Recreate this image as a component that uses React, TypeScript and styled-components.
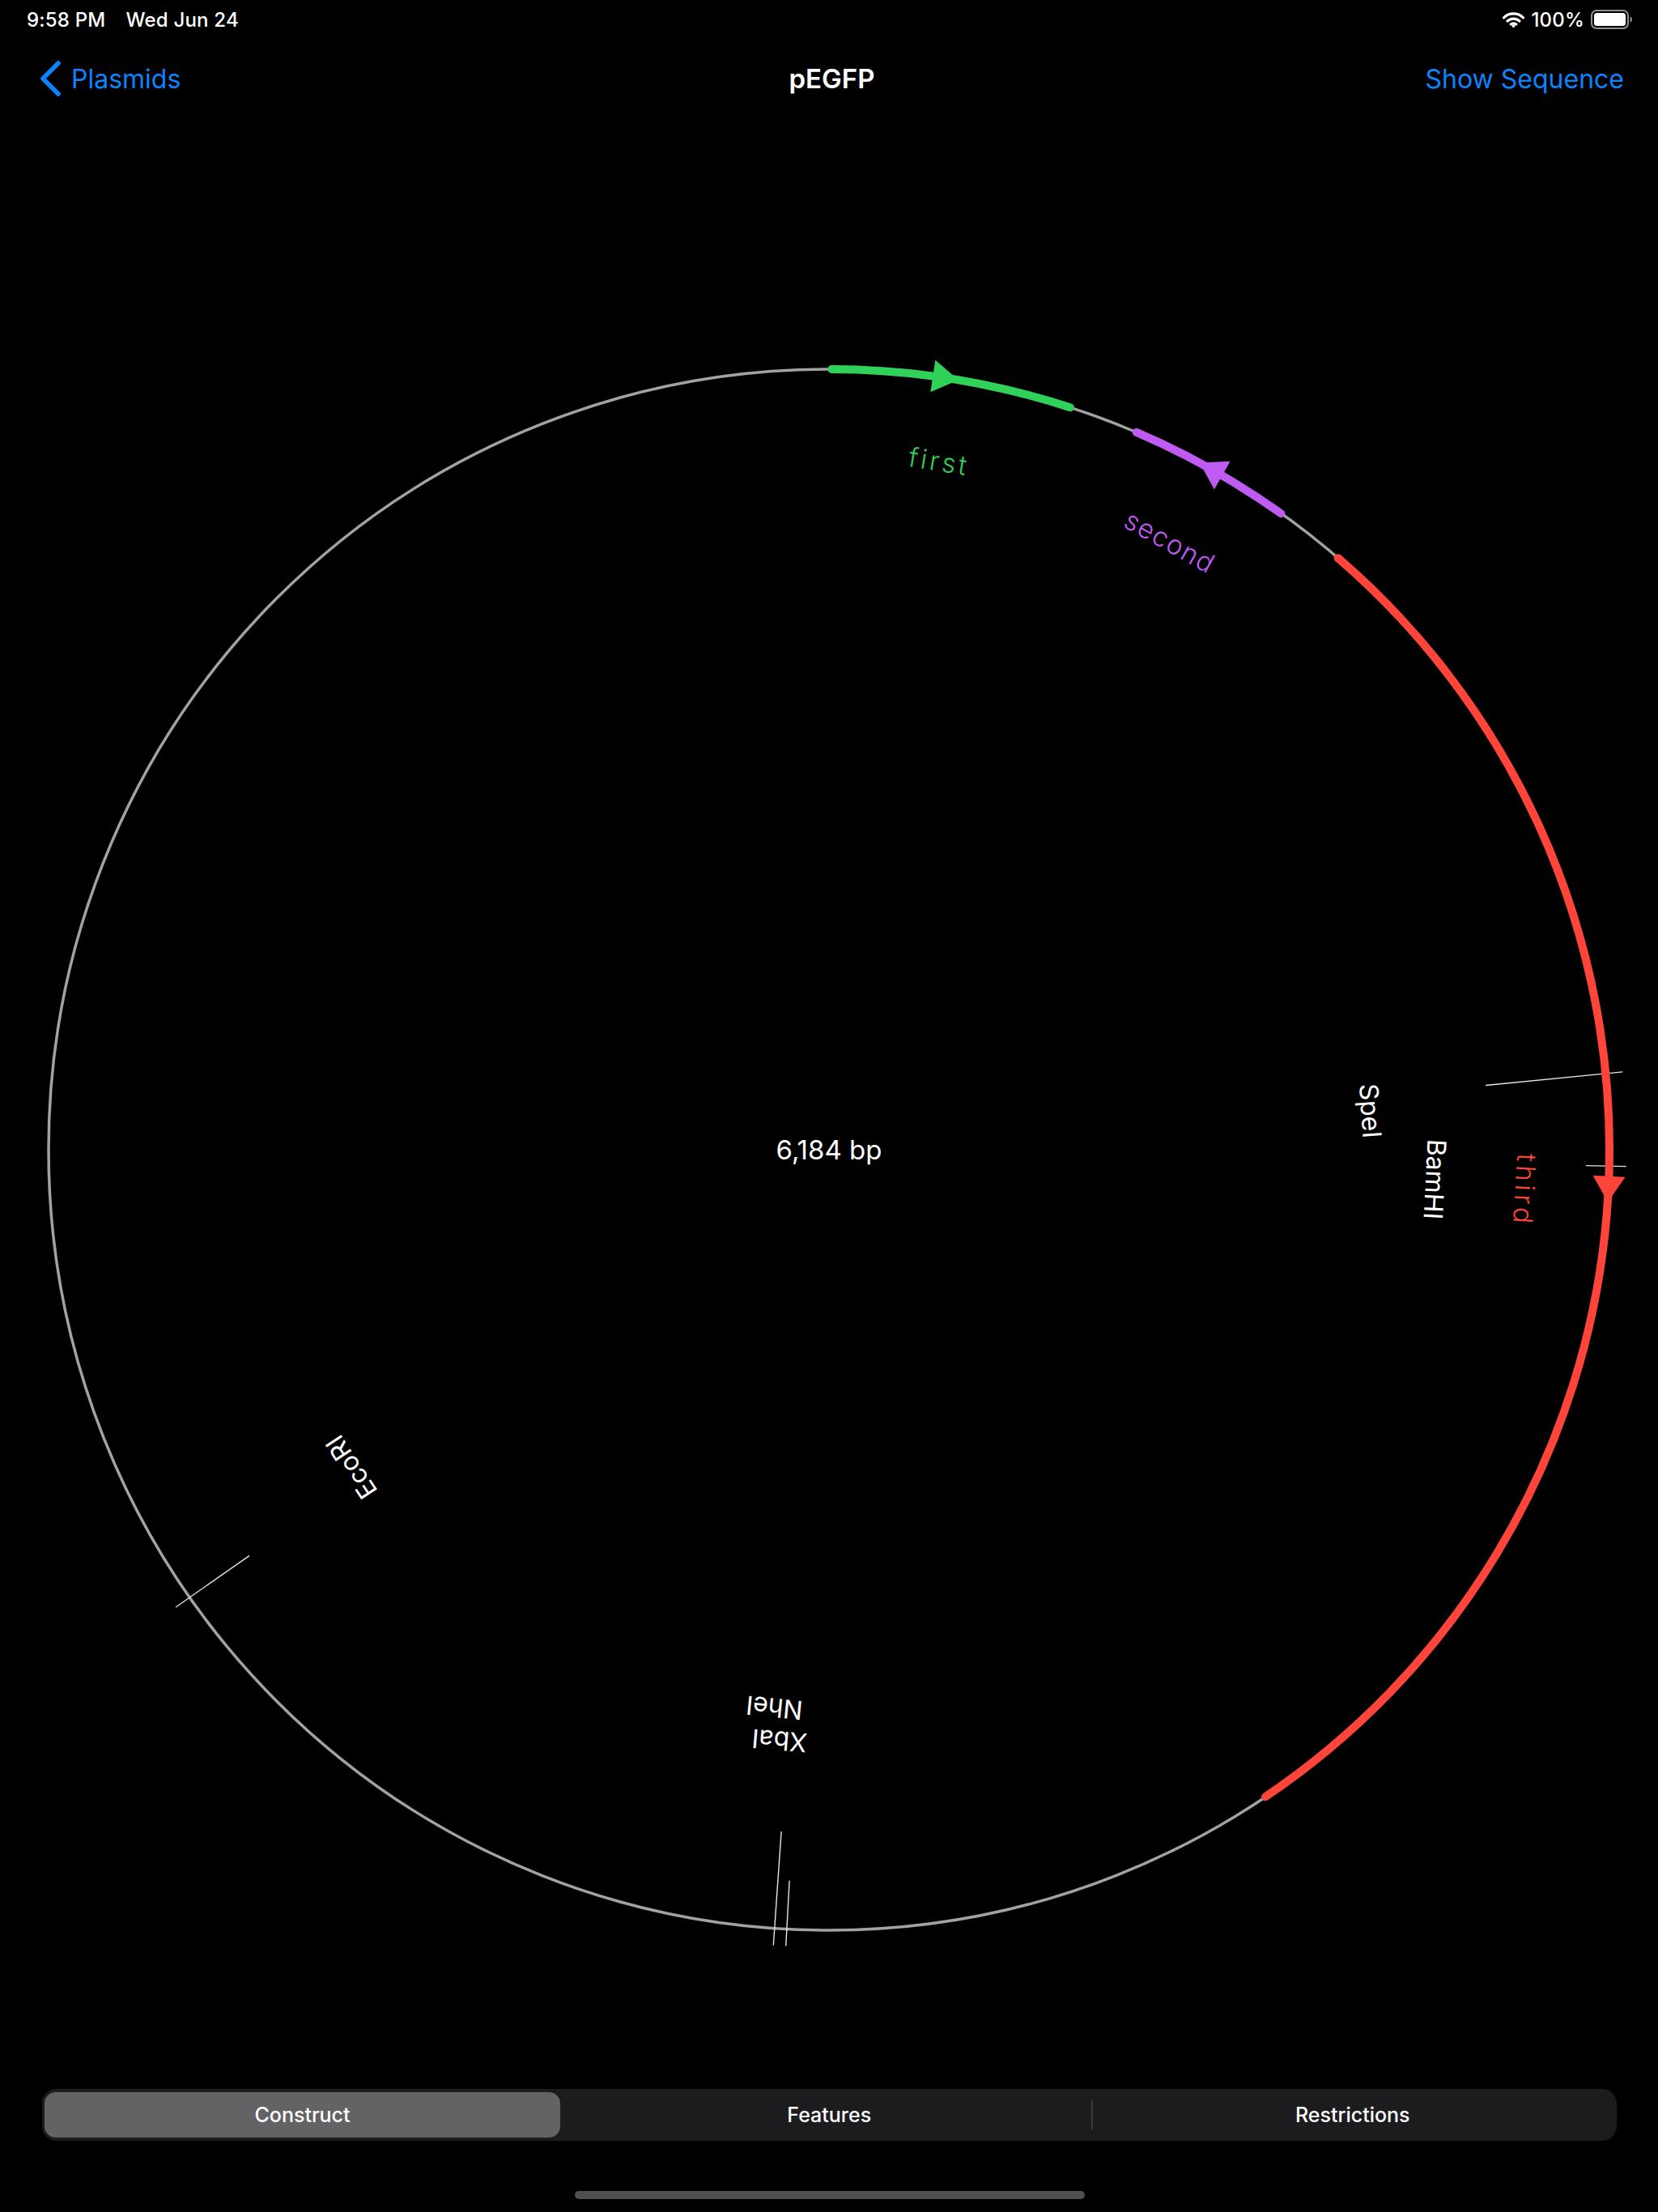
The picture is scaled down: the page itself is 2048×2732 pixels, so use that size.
import React from 'react';
import styled, { createGlobalStyle } from 'styled-components';

const GlobalStyle = createGlobalStyle`
  html, body { margin: 0; padding: 0; background: #000; }
  body { font-family: Inter, "Noto Sans", "Liberation Sans", sans-serif; -webkit-font-smoothing: antialiased; }
  #root { width: 2048px; }
`;

const BLUE = '#0a84ff';

const Screen = styled.div`
  width: 2048px;
  height: 2732px;
  display: flex;
  flex-direction: column;
  background: #000;
  color: #fff;
  overflow: hidden;
`;

const StatusBar = styled.div`
  height: 48px;
  display: flex;
  align-items: center;
  justify-content: space-between;
  padding: 0 31px 0 33px;
  font-size: 24px;
  font-weight: 500;
  letter-spacing: 0.2px;
`;

const StatusGroup = styled.div<{ $gap: number }>`
  display: flex;
  align-items: center;
  gap: ${(p) => p.$gap}px;
`;

const NavBar = styled.div`
  height: 98px;
  display: grid;
  grid-template-columns: 1fr auto 1fr;
  align-items: center;
  padding: 0 42px 0 49px;
`;

const BackButton = styled.div`
  display: flex;
  align-items: center;
  gap: 12px;
  color: ${BLUE};
  font-size: 32px;
  font-weight: 400;
`;

const Title = styled.div`
  font-size: 33px;
  font-weight: 600;
  color: #fff;
`;

const NavAction = styled.div`
  justify-self: end;
  color: ${BLUE};
  font-size: 32px;
  font-weight: 400;
`;

const MapArea = styled.div`
  flex: 1;
  display: flex;
`;

const MapSvg = styled.svg`
  display: block;
  width: 2048px;
  height: 2434px;
`;

const Footer = styled.div`
  display: flex;
  flex-direction: column;
  align-items: center;
  padding: 0 51px 16px 52px;
`;

const Segmented = styled.div`
  width: 100%;
  height: 64px;
  box-sizing: border-box;
  display: flex;
  padding: 4px 3px;
  background: #1c1c1e;
  border-radius: 18px;
`;

const Segment = styled.div<{ $selected?: boolean; $divider?: boolean }>`
  flex: ${(p) => (p.$selected ? '0 0 637px' : '1 1 0')};
  position: relative;
  display: flex;
  align-items: center;
  justify-content: center;
  border-radius: 14px;
  margin-right: ${(p) => (p.$selected ? '9px' : '0')};
  font-size: 25px;
  font-weight: 500;
  color: #fff;
  background: ${(p) => (p.$selected ? '#636366' : 'transparent')};
  &::before {
    content: '';
    display: ${(p) => (p.$divider ? 'block' : 'none')};
    position: absolute;
    left: 0;
    top: 10px;
    bottom: 10px;
    width: 2px;
    background: #3a3a3c;
  }
`;

const HomeIndicator = styled.div`
  margin-top: 62px;
  width: 630px;
  height: 10px;
  border-radius: 5px;
  background: #505050;
`;

/* ---------- map geometry ---------- */
const CX = 1024;
const CY = 1420;
const R = 964;

const pt = (deg: number, r: number): [number, number] => {
  const a = (deg * Math.PI) / 180;
  return [CX + r * Math.sin(a), CY - r * Math.cos(a)];
};

const arcPath = (a0: number, a1: number, r: number) => {
  const [x0, y0] = pt(a0, r);
  const [x1, y1] = pt(a1, r);
  const large = a1 - a0 > 180 ? 1 : 0;
  return `M${x0.toFixed(2)} ${y0.toFixed(2)} A${r} ${r} 0 ${large} 1 ${x1.toFixed(2)} ${y1.toFixed(2)}`;
};

const arrowHead = (deg: number, dir: 1 | -1, len = 32, w = 40) => {
  const a = (deg * Math.PI) / 180;
  const tx = Math.cos(a) * dir;
  const ty = Math.sin(a) * dir;
  const nx = Math.sin(a);
  const ny = -Math.cos(a);
  const [px, py] = pt(deg, R);
  const tip = [px + (tx * len) / 2, py + (ty * len) / 2];
  const bc = [px - (tx * len) / 2, py - (ty * len) / 2];
  const c1 = [bc[0] + (nx * w) / 2, bc[1] + (ny * w) / 2];
  const c2 = [bc[0] - (nx * w) / 2, bc[1] - (ny * w) / 2];
  return [tip, c1, c2].map((p) => `${p[0].toFixed(2)},${p[1].toFixed(2)}`).join(' ');
};

type Feature = {
  name: string;
  color: string;
  start: number;
  end: number;
  dir: 1 | -1;
  arrow: number;
  spacing: number;
};

const features: Feature[] = [
  { name: 'first', color: '#30d158', start: 0.2, end: 18, dir: 1, arrow: 8.6, spacing: 3.5 },
  { name: 'second', color: '#bf5af2', start: 23.2, end: 35.4, dir: -1, arrow: 29.3, spacing: 1.5 },
  { name: 'third', color: '#ff453a', start: 40.7, end: 146, dir: 1, arrow: 92.9, spacing: 4.5 },
];

type Site = { name: string; angle: number; inner: number; labelAngle: number; labelR: number };

const sites: Site[] = [
  { name: 'SpeI', angle: 84.4, inner: 815, labelAngle: 85.9, labelR: 671 },
  { name: 'BamHI', angle: 91.2, inner: 935, labelAngle: 92.8, labelR: 750 },
  { name: 'EcoRI', angle: 235, inner: 874, labelAngle: 236.4, labelR: 709 },
  { name: 'XbaI', angle: 184, inner: 844, labelAngle: 184.8, labelR: 733 },
  { name: 'NheI', angle: 183.1, inner: 904, labelAngle: 185.6, labelR: 693 },
];

const PlasmidMap: React.FC = () => (
  <MapSvg viewBox="0 146 2048 2434" xmlns="http://www.w3.org/2000/svg">
    <circle cx={CX} cy={CY} r={R} fill="none" stroke="#a1a1a6" strokeWidth={3.5} />
    {sites.map((s) => {
      const [x0, y0] = pt(s.angle, s.inner);
      const [x1, y1] = pt(s.angle, 985);
      return (
        <line key={`l-${s.name}`} x1={x0} y1={y0} x2={x1} y2={y1} stroke="#e5e5ea" strokeWidth={1.4} />
      );
    })}
    {features.map((f) => (
      <g key={f.name}>
        <path d={arcPath(f.start, f.end, R)} fill="none" stroke={f.color} strokeWidth={10} strokeLinecap="round" />
        <polygon points={arrowHead(f.arrow, f.dir)} fill={f.color} />
        <text
          x={CX}
          y={CY - 849}
          transform={`rotate(${(f.start + f.end) / 2} ${CX} ${CY})`}
          textAnchor="middle"
          fill={f.color}
          fontSize={33}
          fontWeight={300}
          letterSpacing={f.spacing}
          fontFamily="Inter, 'Noto Sans', sans-serif"
        >
          {f.name}
        </text>
      </g>
    ))}
    {sites.map((s) => (
      <text
        key={`t-${s.name}`}
        x={CX}
        y={CY - (s.labelR - 12)}
        transform={`rotate(${s.labelAngle} ${CX} ${CY})`}
        textAnchor="middle"
        fill="#fff"
        fontSize={32}
        fontFamily="Inter, 'Noto Sans', sans-serif"
      >
        {s.name}
      </text>
    ))}
    <text
      x={CX}
      y={CY + 12}
      textAnchor="middle"
      fill="#fff"
      fontSize={33}
      fontFamily="Inter, 'Noto Sans', sans-serif"
    >
      6,184 bp
    </text>
  </MapSvg>
);

const WifiIcon = () => (
  <svg width="27" height="19" viewBox="0 0 27 19">
    <path d="M1.5 6.8 A17 17 0 0 1 25.5 6.8" fill="none" stroke="#fff" strokeWidth="3.2" strokeLinecap="round" />
    <path d="M6 11 A11 11 0 0 1 21 11" fill="none" stroke="#fff" strokeWidth="3.2" strokeLinecap="round" />
    <path d="M10.2 15 A5 5 0 0 1 16.8 15" fill="none" stroke="#fff" strokeWidth="3.2" strokeLinecap="round" />
    <circle cx="13.5" cy="17" r="2" fill="#fff" />
  </svg>
);

const BatteryIcon = () => (
  <svg width="52" height="24" viewBox="0 0 52 24">
    <rect x="1" y="1" width="45" height="22" rx="6" fill="none" stroke="#8e8e93" strokeWidth="2" />
    <rect x="4" y="4" width="39" height="16" rx="3.5" fill="#fff" />
    <path d="M48.5 8.5 Q51 9 51 12 Q51 15 48.5 15.5 Z" fill="#8e8e93" />
  </svg>
);

const Chevron = () => (
  <svg width="27" height="44" viewBox="0 0 27 44">
    <polyline points="23,3 4,22 23,41" fill="none" stroke={BLUE} strokeWidth="5.5" strokeLinecap="round" strokeLinejoin="round" />
  </svg>
);

export default function App() {
  return (
    <Screen>
      <GlobalStyle />
      <StatusBar>
        <StatusGroup $gap={25}>
          <span>9:58 PM</span>
          <span>Wed Jun 24</span>
        </StatusGroup>
        <StatusGroup $gap={8}>
          <WifiIcon />
          <span>100%</span>
          <BatteryIcon />
        </StatusGroup>
      </StatusBar>
      <NavBar>
        <BackButton>
          <Chevron />
          <span>Plasmids</span>
        </BackButton>
        <Title>pEGFP</Title>
        <NavAction>Show Sequence</NavAction>
      </NavBar>
      <MapArea>
        <PlasmidMap />
      </MapArea>
      <Footer>
        <Segmented>
          <Segment $selected>Construct</Segment>
          <Segment>Features</Segment>
          <Segment $divider>Restrictions</Segment>
        </Segmented>
        <HomeIndicator />
      </Footer>
    </Screen>
  );
}
